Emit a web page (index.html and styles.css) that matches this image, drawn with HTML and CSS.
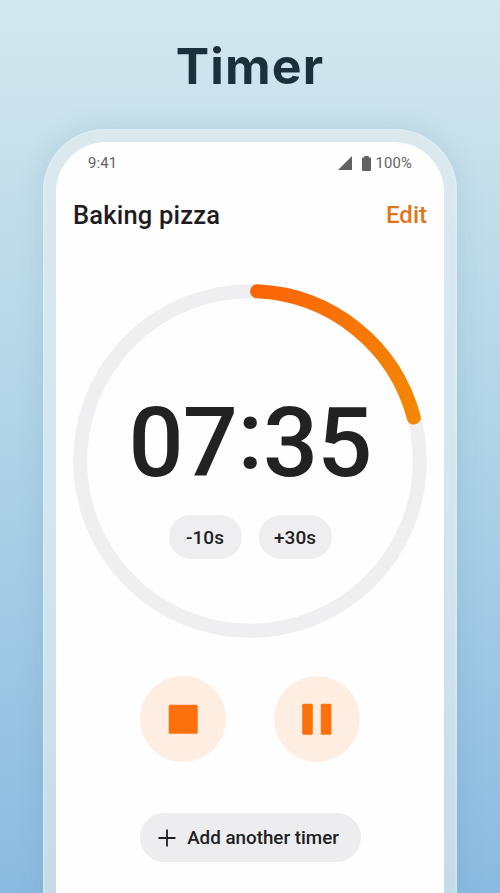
FILE: index.html
```html
<!DOCTYPE html>
<html lang="en">
<head>
<meta charset="utf-8">
<title>Timer</title>
<link rel="stylesheet" href="styles.css">
</head>
<body>
<div class="page">
  <h1 class="headline">Timer</h1>
  <div class="phone">
    <main class="screen">
      <div class="status">
        <span>9:41</span>
        <span class="status-right">
          <svg class="signal" viewBox="0 0 14 14"><path d="M0 14L14 0V14Z"/></svg>
          <svg class="battery" viewBox="0 0 9 15"><path d="M2.2 0H6.8V1.4H8Q9 1.4 9 2.6V13.8Q9 15 8 15H1Q0 15 0 13.8V2.6Q0 1.4 1 1.4H2.2Z"/></svg>
          <span>100%</span>
        </span>
      </div>
      <header class="bar">
        <h2 class="name">Baking pizza</h2>
        <a class="edit">Edit</a>
      </header>
      <section class="dial">
        <svg class="ring" viewBox="0 0 354 354">
          <defs>
            <linearGradient id="arc" gradientUnits="userSpaceOnUse" x1="184" y1="7" x2="341" y2="134">
              <stop offset="0" stop-color="#fb6507"/>
              <stop offset="1" stop-color="#f38803"/>
            </linearGradient>
          </defs>
          <circle class="track" cx="177" cy="177" r="169.8"/>
          <path class="progress" d="M184 7.3A169.8 169.8 0 0 1 340.8 133.6"/>
        </svg>
        <div class="readout">
          <div class="time">07<span class="colon">:</span>35</div>
          <div class="adjust">
            <button class="chip">-10s</button>
            <button class="chip">+30s</button>
          </div>
        </div>
      </section>
      <div class="controls">
        <button class="round" aria-label="Stop"><svg viewBox="0 0 86 86"><rect x="28.7" y="28.7" width="29" height="29" rx="1.5"/></svg></button>
        <button class="round" aria-label="Pause"><svg viewBox="0 0 86 86"><rect x="28.2" y="27.8" width="10.6" height="31" rx="1.5"/><rect x="46.8" y="27.8" width="10.6" height="31" rx="1.5"/></svg></button>
      </div>
      <button class="add">
        <svg class="plus" viewBox="0 0 18 18"><path d="M9 .5V17.5M.5 9H17.5"/></svg>
        <span>Add another timer</span>
      </button>
    </main>
  </div>
</div>
</body>
</html>
```
FILE: styles.css
```css
* { box-sizing: border-box; }
body { margin: 0; font-family: Roboto, sans-serif; }
button { border: 0; padding: 0; font: inherit; color: inherit; }
svg { display: block; }

.page {
  height: 893px;
  overflow: hidden;
  display: flex;
  flex-direction: column;
  align-items: center;
  background: linear-gradient(180deg, #d3e7ef 0, #cbe2ec 12%, #bddbe9 30%, #afd3e7 50%, #a1c9e5 70%, #8bbae0 100%);
}
.headline {
  flex: none;
  margin: 0;
  height: 129px;
  padding-top: 37px;
  font: 700 50px/58px Inter, sans-serif;
  letter-spacing: 1.2px;
  color: #1b303a;
}
.phone {
  flex: none;
  width: 414px;
  height: 850px;
  padding: 13px;
  border-radius: 62px;
  background: linear-gradient(180deg, #dbe9ef, #d2e5ee 50%, #c4dbe8 92%);
  box-shadow: 0 0 26px rgba(65, 125, 155, .17), inset 0 0 3px 1px rgba(225, 242, 248, .7);
}
.screen {
  height: 100%;
  padding: 0 17px;
  border-radius: 50px;
  background: #fefefe;
  display: flex;
  flex-direction: column;
  align-items: center;
}
.status {
  width: 100%;
  height: 42px;
  padding: 0 15px;
  display: flex;
  justify-content: space-between;
  align-items: center;
  font-size: 14.8px;
  letter-spacing: .2px;
  color: #626262;
}
.status-right { display: flex; align-items: center; }
.status svg { fill: #626262; }
.signal { width: 14px; height: 14px; margin-right: 10px; }
.battery { width: 9px; height: 15px; margin-right: 4px; }
.bar {
  width: 100%;
  height: 62px;
  display: flex;
  justify-content: space-between;
  align-items: center;
}
.name { margin: 0; font-size: 25.5px; font-weight: 500; letter-spacing: .2px; color: #1e1c1f; }
.edit { font-size: 24px; font-weight: 500; color: #e0761a; }
.dial { display: grid; flex: none; width: 354px; margin-top: 38px; }
.ring, .readout { grid-area: 1 / 1; }
.ring { width: 354px; height: 354px; fill: none; stroke-width: 14; }
.track { stroke: #efeff1; }
.progress { stroke: url(#arc); stroke-linecap: round; }
.readout { display: flex; flex-direction: column; align-items: center; padding-top: 109px; }
.time { font-size: 97px; line-height: 100px; font-weight: 500; color: #222; letter-spacing: -.8px; }
.colon { position: relative; top: -8px; margin: 0 .5px; }
.adjust { display: flex; gap: 17px; margin-top: 22px; }
.chip {
  width: 73px;
  height: 44px;
  border-radius: 22px;
  background: #eeeef0;
  font-size: 19px;
  font-weight: 500;
  color: #202022;
}
.controls { display: flex; gap: 48px; margin-top: 38px; }
.round { width: 86px; height: 86px; border-radius: 50%; background: #feeee2; }
.round svg { width: 86px; height: 86px; fill: #fd700c; }
.add {
  width: 221px;
  height: 49px;
  margin-top: 51px;
  padding-right: 3px;
  border-radius: 25px;
  background: #ededef;
  display: flex;
  align-items: center;
  justify-content: center;
  gap: 11px;
  font-size: 18.8px;
  font-weight: 500;
  color: #202022;
}
.plus { width: 18px; height: 18px; fill: none; stroke: #202022; stroke-width: 1.8; }
```
